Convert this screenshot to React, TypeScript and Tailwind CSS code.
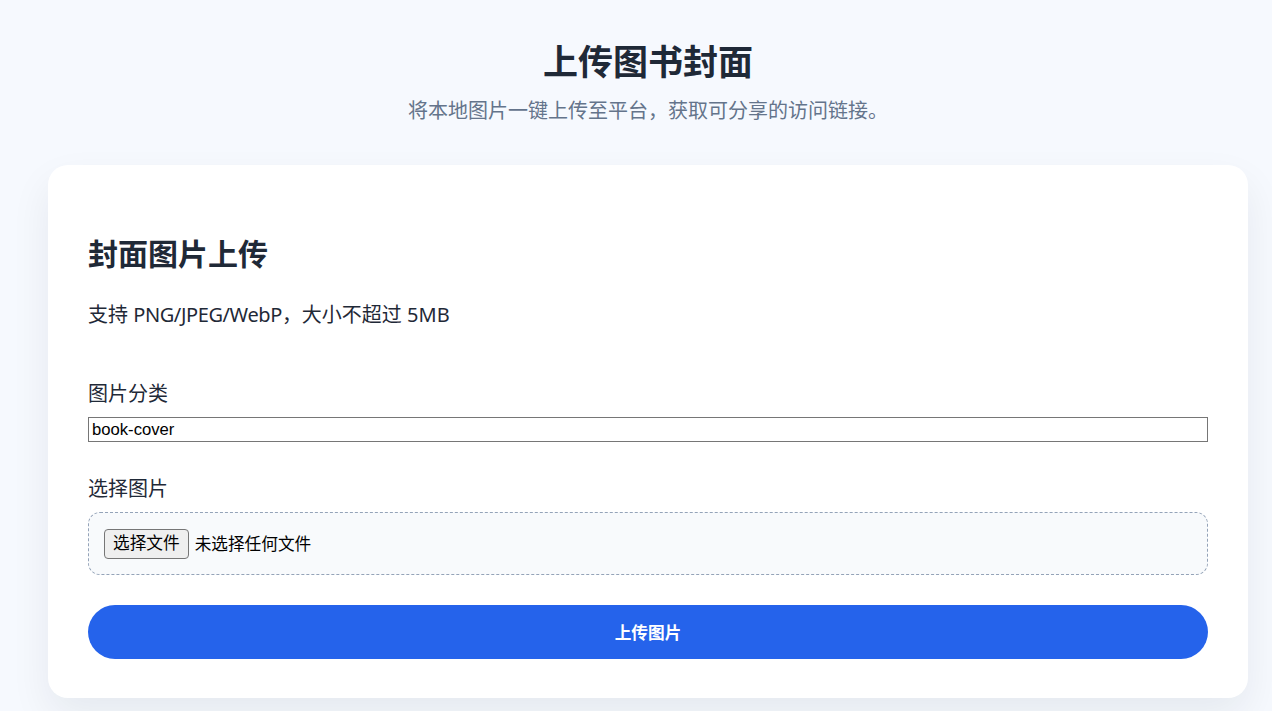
import React from "react";

const cjk = "font-['Noto_Sans','Noto_Sans_CJK_SC',sans-serif]";

export default function App() {
  return (
    <div
      className={`min-h-screen w-full bg-[#f6f9fe] ${cjk} text-[#1f2937] pl-[48px] pr-[24px] pb-[40px]`}
    >
      <header className="flex flex-col items-center pt-[40px]">
        <h1 className="text-[35px] leading-[44px] font-bold text-[#1f2937]">上传图书封面</h1>
        <p className="mt-[12px] text-[20px] leading-[30px] text-[#64748b]">
          将本地图片一键上传至平台，获取可分享的访问链接。
        </p>
      </header>

      <main className="mt-[39px] w-full rounded-[20px] bg-white px-[40px] pt-[67px] pb-[39px] shadow-[0_18px_40px_rgba(15,23,42,0.07)]">
        <h2 className="text-[30px] leading-[44px] font-bold text-[#1f2937]">封面图片上传</h2>
        <p className="mt-[24px] text-[20px] leading-[30px] text-[#1f2937]">
          支持 <span className="tracking-[-0.4px]">PNG/JPEG/WebP</span>，大小不超过 5MB
        </p>

        <label className="mt-[49px] block text-[20px] leading-[30px] text-[#1f2937]">图片分类</label>
        <input
          readOnly
          value="book-cover"
          className="mt-[8px] block h-[25px] w-full border border-[#767676] bg-white px-[3px] font-['Liberation_Sans','Noto_Sans_CJK_SC',sans-serif] text-[16.67px] text-black outline-none"
        />

        <label className="mt-[32px] block text-[20px] leading-[30px] text-[#1f2937]">选择图片</label>
        <div className="mt-[8px] flex h-[63px] items-center rounded-[12px] border border-dashed border-[#94a3b8] bg-[#f8fafc] px-[15px]">
          <div className="flex items-center gap-[6px] text-[16.67px] text-black">
            <span className="flex h-[30px] items-center rounded-[4px] border border-[#767676] bg-[#efefef] px-[8px] leading-none">
              选择文件
            </span>
            <span>未选择任何文件</span>
          </div>
        </div>

        <button className="mt-[30px] flex h-[54px] w-full items-center justify-center rounded-full bg-[#2563eb] text-[16.67px] font-bold text-white">
          上传图片
        </button>
      </main>
    </div>
  );
}
